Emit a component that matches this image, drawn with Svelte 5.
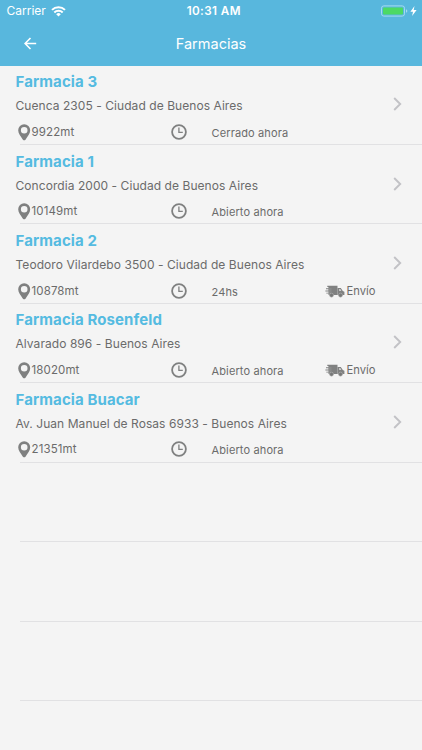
<script lang="ts">
	interface Pharmacy {
		name: string;
		address: string;
		distance: string;
		status: string;
		delivery?: boolean;
	}

	const pharmacies: Pharmacy[] = [
		{ name: 'Farmacia 3', address: 'Cuenca 2305 - Ciudad de Buenos Aires', distance: '9922mt', status: 'Cerrado ahora' },
		{ name: 'Farmacia 1', address: 'Concordia 2000 - Ciudad de Buenos Aires', distance: '10149mt', status: 'Abierto ahora' },
		{ name: 'Farmacia 2', address: 'Teodoro Vilardebo 3500 - Ciudad de Buenos Aires', distance: '10878mt', status: '24hs', delivery: true },
		{ name: 'Farmacia Rosenfeld', address: 'Alvarado 896 - Buenos Aires', distance: '18020mt', status: 'Abierto ahora', delivery: true },
		{ name: 'Farmacia Buacar', address: 'Av. Juan Manuel de Rosas 6933 - Buenos Aires', distance: '21351mt', status: 'Abierto ahora' },
	];

	// the table keeps drawing separators below the last result
	const emptyRows = [0, 1, 2, 3];
</script>

<div class="screen">
	<header>
		<div class="status-bar">
			<div class="carrier">
				<span>Carrier</span>
				<svg width="15" height="11" viewBox="0 0 15 11" fill="none" stroke="#fff" stroke-width="2">
					<path d="M1 3.9a9.2 9.2 0 0 1 13 0" />
					<path d="M3.3 6.5a5.9 5.9 0 0 1 8.4 0" />
					<path d="M7.5 10.5 5.2 8.2a3.3 3.3 0 0 1 4.6 0z" fill="#fff" stroke="none" />
				</svg>
			</div>
			<div class="time">10:31 AM</div>
			<div class="power">
				<svg width="40" height="12" viewBox="0 0 40 12">
					<rect x="0.5" y="0.9" width="23" height="10.2" rx="2.3" fill="none" stroke="#a5dbee" />
					<rect x="2" y="2.4" width="20" height="7.2" rx="1" fill="#4cd964" />
					<path d="M25 4.2q1.4.5 1.4 1.8T25 7.8z" fill="#a5dbee" />
					<path d="M33.5.9 29.4 6.7h2.6l-.9 4.4 4.5-6.2h-2.9z" fill="#fff" />
				</svg>
			</div>
		</div>
		<nav>
			<button class="back" aria-label="Volver">
				<svg width="13" height="13" viewBox="0 0 13 13" fill="none" stroke="#fff" stroke-width="1.6">
					<path d="M12.2 6.5H1.2M6.5 1 1.1 6.5l5.4 5.5" />
				</svg>
			</button>
			<h1>Farmacias</h1>
		</nav>
	</header>

	<ul>
		{#each pharmacies as pharmacy}
			<li>
				<h2>{pharmacy.name}</h2>
				<p class="address">{pharmacy.address}</p>
				<div class="meta">
					<span class="distance">
						<svg width="13" height="17" viewBox="0 0 13 17">
							<path
								fill="#7f8080"
								fill-rule="evenodd"
								d="M6.2.2a6 6 0 0 0-6 6c0 3.4 2.6 6.2 4.7 9.5q1.3 1.2 2.6 0c2.1-3.3 4.7-6.1 4.7-9.5a6 6 0 0 0-6-6zm0 2.7a3.3 3.3 0 1 1 0 6.6 3.3 3.3 0 0 1 0-6.6z"
							/>
						</svg>
						{pharmacy.distance}
					</span>
					<span class="clock">
						<svg width="16" height="16" viewBox="0 0 16 16" fill="none" stroke="#7f8080">
							<circle cx="8" cy="8" r="6.9" stroke-width="1.8" />
							<path d="M7.9 3.5v4.9h3.9" stroke-width="1.3" />
						</svg>
					</span>
					<span class="status">{pharmacy.status}</span>
					{#if pharmacy.delivery}
						<span class="delivery">
							<svg width="20" height="13" viewBox="0 0 20 13">
								<path fill="#808181" d="M2.3.8h10.2V10h-9V8.6H1.3v-.9h2.2V6.4H.4v-.9h3V4.2H1v-.9h2.4V2H2.3z" />
								<path fill="#808181" d="M12.5 3h3.3l2 3 1.6.8V10h-6.9z" />
								<path fill="#cfcfcf" d="M14.1 4.1h1.2l1.1 1.8h-2.3z" />
								<path stroke="#a8a8a8" stroke-width=".5" d="M3.5 4h3M3.5 6h3M3.5 8H6" />
								<g fill="#777878" stroke="#bdbdbd" stroke-width=".5">
									<circle cx="6.5" cy="10.2" r="2" />
									<circle cx="15.5" cy="10.2" r="2" />
								</g>
							</svg>
							Envío
						</span>
					{/if}
				</div>
				<svg class="chevron" width="9" height="14" viewBox="0 0 9 14" fill="none" stroke="#c2c2c6" stroke-width="1.9">
					<path d="m1.2 1 6 6-6 6" />
				</svg>
			</li>
		{/each}
		{#each emptyRows as row (row)}
			<li></li>
		{/each}
	</ul>
</div>

<style>
	:global(body) {
		background: #f4f4f4;
	}

	.screen {
		height: 750px;
		overflow: hidden;
		background: #f4f4f4;
		color: #6b6b6b;
		font-family: Inter, 'Liberation Sans', sans-serif;
	}

	header {
		box-sizing: border-box;
		height: 65.6px;
		background: #58b7dd;
		color: #fff;
	}

	.status-bar {
		display: grid;
		grid-template-columns: 1fr auto 1fr;
		align-items: center;
		height: 22px;
		padding: 0 1px 0 6.5px;
		font-size: 12px;
		line-height: 22px;
	}

	.carrier {
		display: flex;
		align-items: center;
		gap: 5px;
	}

	.time {
		font-size: 11.7px;
		font-weight: 600;
		letter-spacing: 0.4px;
	}

	.power {
		display: flex;
		justify-content: flex-end;
	}

	nav {
		display: grid;
		grid-template-columns: 60px 1fr 60px;
		align-items: center;
		height: 43px;
	}

	.back {
		display: flex;
		padding: 0 0 2px 23.5px;
		border: 0;
		background: none;
	}

	h1 {
		margin: 0;
		font-size: 14.5px;
		font-weight: 400;
		line-height: 44px;
		text-align: center;
	}

	ul {
		margin: 0;
		padding: 0;
		list-style: none;
	}

	li {
		display: grid;
		grid-template-columns: 1fr 9px;
		grid-template-rows: 20px 23px 1fr;
		box-sizing: border-box;
		height: 79.45px;
		padding: 6.5px 20px 0 15.5px;
		background: linear-gradient(#e1e1e3, #e1e1e3) 20px 100% / 100% 1px no-repeat;
	}

	h2 {
		margin: 0;
		color: #55bbe1;
		font-size: 15px;
		font-weight: 700;
		letter-spacing: 0.1px;
		line-height: 20px;
	}

	.address {
		grid-row: 2;
		margin: 0;
		padding-top: 4px;
		font-size: 12px;
		letter-spacing: 0.06px;
		line-height: 19px;
		white-space: nowrap;
	}

	.meta {
		grid-row: 3;
		display: grid;
		grid-template-columns: 155px 41px 113px 1fr;
		align-items: start;
		padding-top: 8.6px;
		font-size: 11.5px;
		line-height: 17px;
		white-space: nowrap;
	}

	.distance,
	.delivery {
		display: flex;
		align-items: center;
		gap: 1px;
	}

	.distance {
		padding-left: 2px;
		letter-spacing: 0.12px;
	}

	.clock {
		display: flex;
	}

	.status {
		padding-top: 1px;
		font-size: 11px;
		letter-spacing: 0.13px;
	}

	.delivery {
		gap: 2px;
		font-size: 11.2px;
	}

	.chevron {
		grid-row: 2;
		grid-column: 2;
		margin-top: 5px;
	}
</style>
